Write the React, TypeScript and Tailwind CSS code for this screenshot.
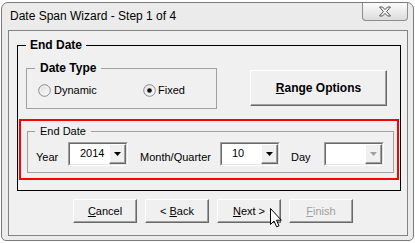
import React from "react";

const Radio = ({ checked }: { checked?: boolean }) => (
  <svg width="13" height="13" viewBox="0 0 13 13">
    <defs>
      <linearGradient id={checked ? "rg1" : "rg2"} x1="0" y1="0" x2="1" y2="1">
        <stop offset="0" stopColor="#d9d9d9" />
        <stop offset="1" stopColor="#ffffff" />
      </linearGradient>
    </defs>
    <circle cx="6.5" cy="6.5" r="5.8" fill={`url(#${checked ? "rg1" : "rg2"})`} stroke="#8a8a8a" strokeWidth="1" />
    <circle cx="6.5" cy="6.5" r="4.3" fill="none" stroke="#f4f4f4" strokeWidth="1" />
    {checked && <circle cx="6.5" cy="6.5" r="2.3" fill="#111" />}
  </svg>
);

const DropBtn = ({ disabled }: { disabled?: boolean }) => (
  <div className="w-[17px] h-full bg-[#f0f0f0] border border-t-white border-l-white border-b-[#696969] border-r-[#696969] shadow-[inset_-1px_-1px_0_#a0a0a0] flex items-center justify-center">
    <svg width="7" height="4" viewBox="0 0 7 4">
      <polygon points="0,0 7,0 3.5,4" fill={disabled ? "#a0a0a0" : "#000"} />
    </svg>
  </div>
);

const Combo = ({ value, disabled }: { value?: string; disabled?: boolean }) => (
  <div className="w-[60px] h-[24px] flex border border-t-[#a0a0a0] border-l-[#a0a0a0] border-b-white border-r-white">
    <div className="flex-1 flex border border-t-[#696969] border-l-[#696969] border-b-[#e3e3e3] border-r-[#e3e3e3] bg-white">
      <div className="flex-1 pl-[10px] pt-[3px] text-[11px] leading-[13px] text-black">{value}</div>
      <DropBtn disabled={disabled} />
    </div>
  </div>
);

const Btn = ({
  children,
  className = "",
}: {
  children: React.ReactNode;
  className?: string;
}) => (
  <div
    className={`bg-[#f0f0f0] border border-t-white border-l-white border-b-[#696969] border-r-[#696969] shadow-[inset_-1px_-1px_0_#a0a0a0] flex items-center justify-center ${className}`}
  >
    {children}
  </div>
);

export default function App() {
  return (
    <div className="relative w-[415px] h-[243px] bg-white pt-[2px] pl-[1px] overflow-hidden font-['Liberation_Sans',Arial,sans-serif] text-black">
      <div className="w-[413px] h-[239px] border border-[#7a7a7a] rounded-t-[7px] rounded-b-[5px] bg-[#ebebeb] flex flex-col">
        {/* title bar */}
        <div className="h-[27px] flex items-start justify-between">
          <div className="pl-[8px] pt-[6px] text-[12px] leading-[15px]">Date Span Wizard - Step 1 of 4</div>
          <div className="mr-[5px] w-[46px] h-[18px] border border-t-0 border-[#8d8d8d] rounded-b-[4px] bg-gradient-to-b from-[#fbfbfb] to-[#dcdcdc] flex items-center justify-center">
            <svg width="14" height="11" viewBox="0 0 14 11">
              <path
                d="M1.5 1 L4.5 1 L7 3.6 L9.5 1 L12.5 1 L8.6 5.5 L12.5 10 L9.5 10 L7 7.4 L4.5 10 L1.5 10 L5.4 5.5 Z"
                fill="#f4f4f4"
                stroke="#555"
                strokeWidth="1"
                strokeLinejoin="round"
              />
            </svg>
          </div>
        </div>
        {/* client */}
        <div className="ml-[6px] mr-[5px] h-[206px] border border-[#838383] bg-[#f0f0f0] flex flex-col">
          <fieldset className="ml-[8px] mt-[7px] w-[384px] border border-black">
            <legend className="ml-[8px] px-[4px] text-[12px] leading-[14px] font-bold">End Date</legend>
            <div className="flex items-start pl-[8px]">
              <fieldset className="mt-[9px] w-[191px] border border-[#a0a0a0]">
                <legend className="ml-[8px] px-[5px] text-[12px] leading-[14px] font-bold">Date Type</legend>
                <div className="flex items-center mt-[9px] pb-[11px] pl-[11px] text-[11px] leading-[13px]">
                  <div className="w-[105px] flex items-center gap-[3px]">
                    <Radio />
                    <span>Dynamic</span>
                  </div>
                  <div className="flex items-center gap-[2px]">
                    <Radio checked />
                    <span>Fixed</span>
                  </div>
                </div>
              </fieldset>
              <Btn className="ml-[33px] mt-[18px] w-[137px] h-[36px]">
                <span className="text-[12px] leading-[14px] font-bold">
                  <span className="underline">R</span>ange Options
                </span>
              </Btn>
            </div>
            <div className="mt-[10px] mx-[1px] mb-[10px] border-2 border-[#ff0000] pl-[6px] pr-[3px] pt-[4px] pb-[5px]">
              <fieldset className="border border-[#a0a0a0]">
                <legend className="ml-[7px] px-[5px] text-[11px] leading-[13px]">End Date</legend>
                <div className="flex items-end pl-[8px] mt-[4px] pb-[6px] text-[11px] leading-[13px]">
                  <span className="w-[32px] mb-[2px]">Year</span>
                  <Combo value="2014" />
                  <span className="ml-[12px] w-[80px] mb-[2px]">Month/Quarter</span>
                  <Combo value="10" />
                  <span className="ml-[11px] w-[33px] mb-[2px]">Day</span>
                  <Combo disabled />
                </div>
              </fieldset>
            </div>
          </fieldset>
          <div className="mt-[8px] pl-[64px] flex gap-[8px] text-[11px] leading-[13px]">
            <Btn className="w-[64px] h-[24px]">
              <span>
                <span className="underline">C</span>ancel
              </span>
            </Btn>
            <Btn className="w-[64px] h-[24px]">
              <span>
                &lt; <span className="underline">B</span>ack
              </span>
            </Btn>
            <Btn className="w-[64px] h-[24px]">
              <span>
                <span className="underline">N</span>ext &gt;
              </span>
            </Btn>
            <Btn className="w-[64px] h-[24px]">
              <span className="text-[#a0a0a0]">
                <span className="underline">F</span>inish
              </span>
            </Btn>
          </div>
        </div>
      </div>
      {/* mouse cursor */}
      <svg className="absolute left-[269px] top-[207px]" width="14" height="22" viewBox="0 0 14 22">
        <path
          d="M1.5 1.5 L1.5 17.5 L5 14 L7.6 19.8 L10 18.8 L7.5 13.2 L12.3 13.2 Z"
          fill="#fff"
          stroke="#000"
          strokeWidth="1"
          strokeLinejoin="miter"
        />
      </svg>
    </div>
  );
}
